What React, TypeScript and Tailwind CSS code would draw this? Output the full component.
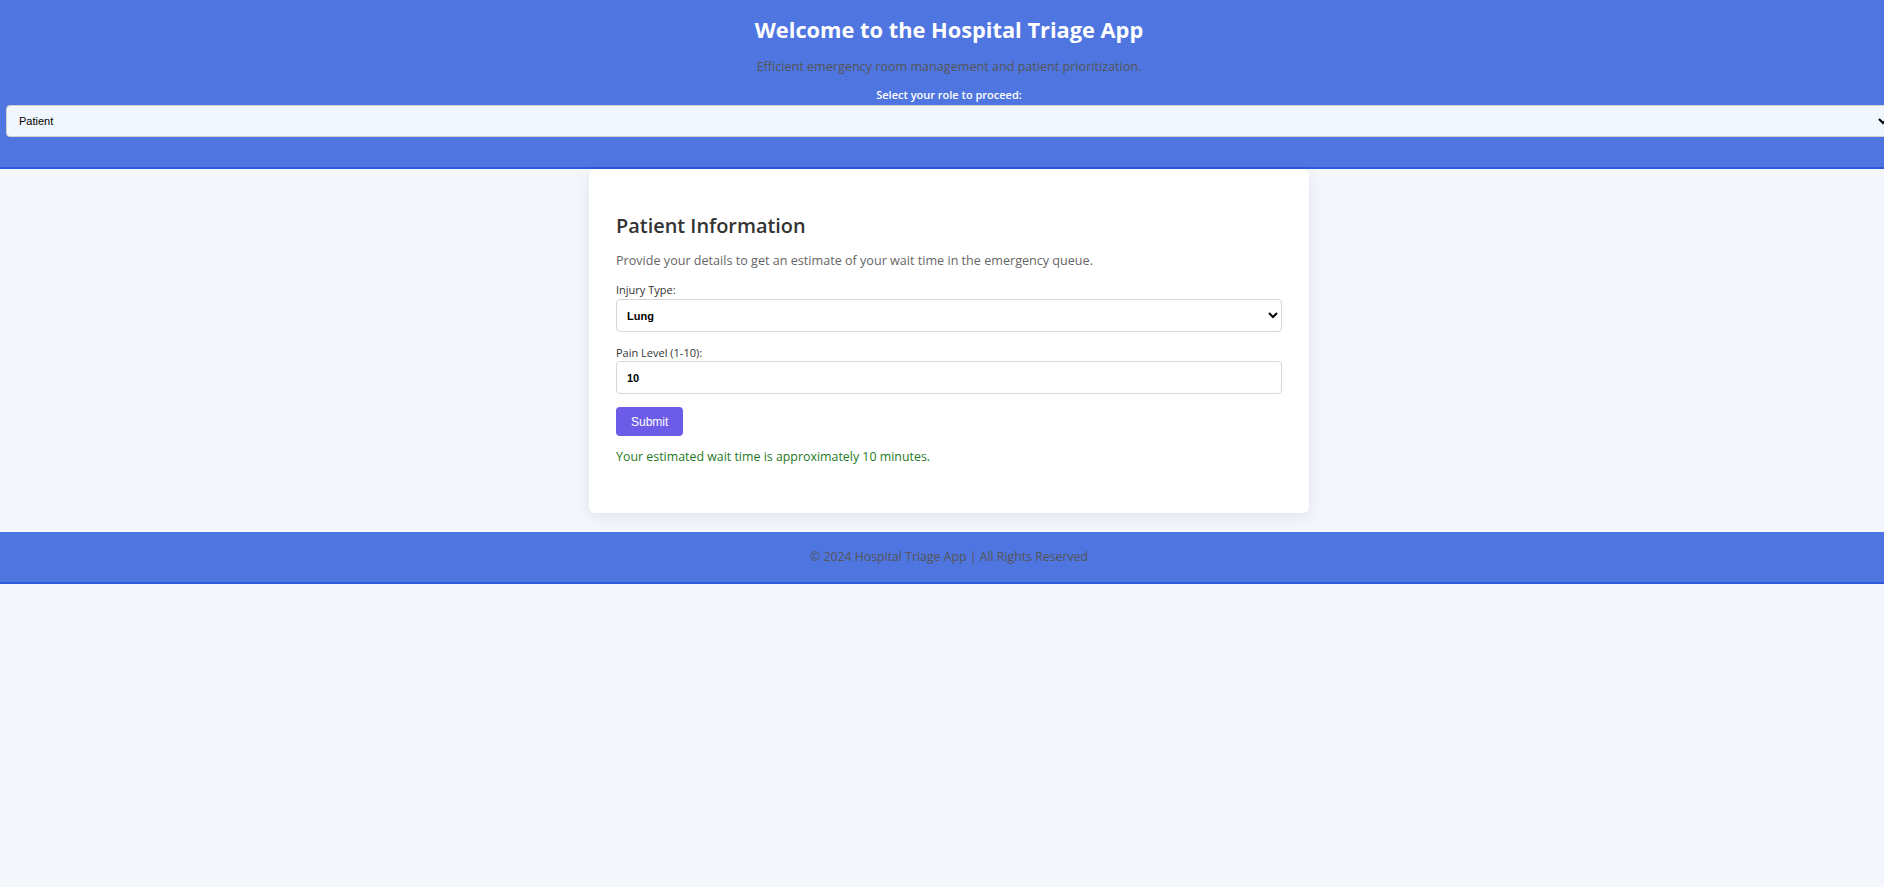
import React, { useState } from 'react';

export default function App() {
  const [role, setRole] = useState('Patient');
  const [injury, setInjury] = useState('Lung');
  const [pain, setPain] = useState('10');
  const [result, setResult] = useState('Your estimated wait time is approximately 10 minutes.');

  const handleSubmit = (e: React.FormEvent) => {
    e.preventDefault();
    const level = parseInt(pain, 10) || 0;
    const minutes = Math.max(10, (11 - level) * 10);
    setResult(`Your estimated wait time is approximately ${minutes} minutes.`);
  };

  return (
    <div className="min-h-screen w-full overflow-hidden bg-[#f3f6fb] font-['Open_Sans',sans-serif]">
      <div className="w-[1898px]">
        {/* Header */}
        <header className="bg-[#4f76e0] border-b-2 border-[#2c5ad9] pt-[15px] pb-[30px] text-center">
          <h1 className="text-[21.8px] leading-[30px] font-bold text-white">Welcome to the Hospital Triage App</h1>
          <p className="mt-[13px] text-[12.6px] leading-[18px] text-[#555]">
            Efficient emergency room management and patient prioritization.
          </p>
          <label className="block mt-[11px] text-[11px] leading-[16px] font-semibold text-white">
            Select your role to proceed:
          </label>
          <select
            value={role}
            onChange={(e) => setRole(e.target.value)}
            className="block mt-[2px] mx-[6px] w-[calc(100%-12px)] h-[32px] px-[8px] bg-[#f0f7ff] border border-[#d0d0d0] rounded-[4px] text-[11px] text-black font-['Liberation_Sans',Arial,sans-serif] outline-none"
          >
            <option>Patient</option>
            <option>Nurse</option>
            <option>Doctor</option>
          </select>
        </header>

        {/* Card */}
        <main className="flex justify-center">
          <div className="w-[720px] bg-white rounded-md shadow-[0_4px_14px_rgba(20,40,90,0.08)] px-[27px] pt-[43px] pb-[47px]">
            <h2 className="text-[19.9px] leading-[28px] font-semibold text-[#333]">Patient Information</h2>
            <p className="mt-[12px] text-[12.6px] leading-[18px] text-[#666]">
              Provide your details to get an estimate of your wait time in the emergency queue.
            </p>
            <form onSubmit={handleSubmit}>
              <label className="block mt-[12px] text-[11px] leading-[15px] text-[#333]">Injury Type:</label>
              <select
                value={injury}
                onChange={(e) => setInjury(e.target.value)}
                className="block mt-[2px] w-full h-[33px] px-[6px] bg-white border border-[#d6d6d6] rounded-[4px] text-[11px] font-bold text-black font-['Liberation_Sans',Arial,sans-serif] outline-none"
              >
                <option>Head</option>
                <option>Lung</option>
                <option>Heart</option>
                <option>Limb</option>
              </select>

              <label className="block mt-[13px] text-[11px] leading-[15px] text-[#333]">Pain Level (1-10):</label>
              <input
                type="number"
                min={1}
                max={10}
                value={pain}
                onChange={(e) => setPain(e.target.value)}
                className="block mt-[1px] w-full h-[33px] px-[10px] bg-white border border-[#d6d6d6] rounded-[4px] text-[11px] font-bold text-black font-['Liberation_Sans',Arial,sans-serif] outline-none"
              />

              <button
                type="submit"
                className="block mt-[13px] h-[29px] px-[15px] bg-[#6c5ce7] rounded-[4px] text-white text-[12px] font-['Liberation_Sans',Arial,sans-serif]"
              >
                Submit
              </button>
            </form>
            <p className="mt-[12px] text-[12.4px] leading-[18px] text-[#1f7a1f]">{result}</p>
          </div>
        </main>

        {/* Footer */}
        <footer className="mt-[19px] bg-[#4f76e0] border-b-2 border-[#2c5ad9] pt-[16px] pb-[16px] text-center">
          <p className="text-[12.3px] leading-[18px] text-[#555]">© 2024 Hospital Triage App | All Rights Reserved</p>
        </footer>
      </div>
    </div>
  );
}
